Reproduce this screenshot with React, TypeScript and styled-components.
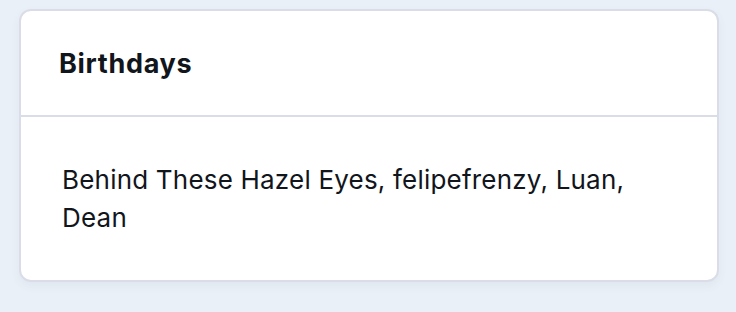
import React from "react";
import styled, { createGlobalStyle } from "styled-components";

const Global = createGlobalStyle`
  html, body { margin: 0; padding: 0; background: #eaf0f7; }
  body { font-family: Inter, "Noto Sans", sans-serif; }
`;

const Page = styled.div`
  padding: 9px 17px 30px 19px;
  min-height: 312px;
  box-sizing: border-box;
`;

const Card = styled.section`
  background: #ffffff;
  border: 2px solid #dadde8;
  border-radius: 12px;
  box-shadow: 0 4px 10px rgba(60, 80, 120, 0.06);
  overflow: hidden;
`;

const Header = styled.div`
  padding: 36px 38px 34px;
  border-bottom: 2px solid #dadde8;
`;

const Title = styled.h2`
  margin: 0;
  font-size: 27px;
  line-height: 34px;
  font-weight: 700;
  letter-spacing: 0.7px;
  color: #11151c;
`;

const Body = styled.div`
  padding: 44px 40px 43px 41px;
`;

const Text = styled.p`
  margin: 0;
  font-size: 26px;
  line-height: 38px;
  letter-spacing: 0.2px;
  color: #11151c;
`;

export default function App() {
  return (
    <>
      <Global />
      <Page>
        <Card>
          <Header>
            <Title>Birthdays</Title>
          </Header>
          <Body>
            <Text>Behind These Hazel Eyes, felipefrenzy, Luan, Dean</Text>
          </Body>
        </Card>
      </Page>
    </>
  );
}
